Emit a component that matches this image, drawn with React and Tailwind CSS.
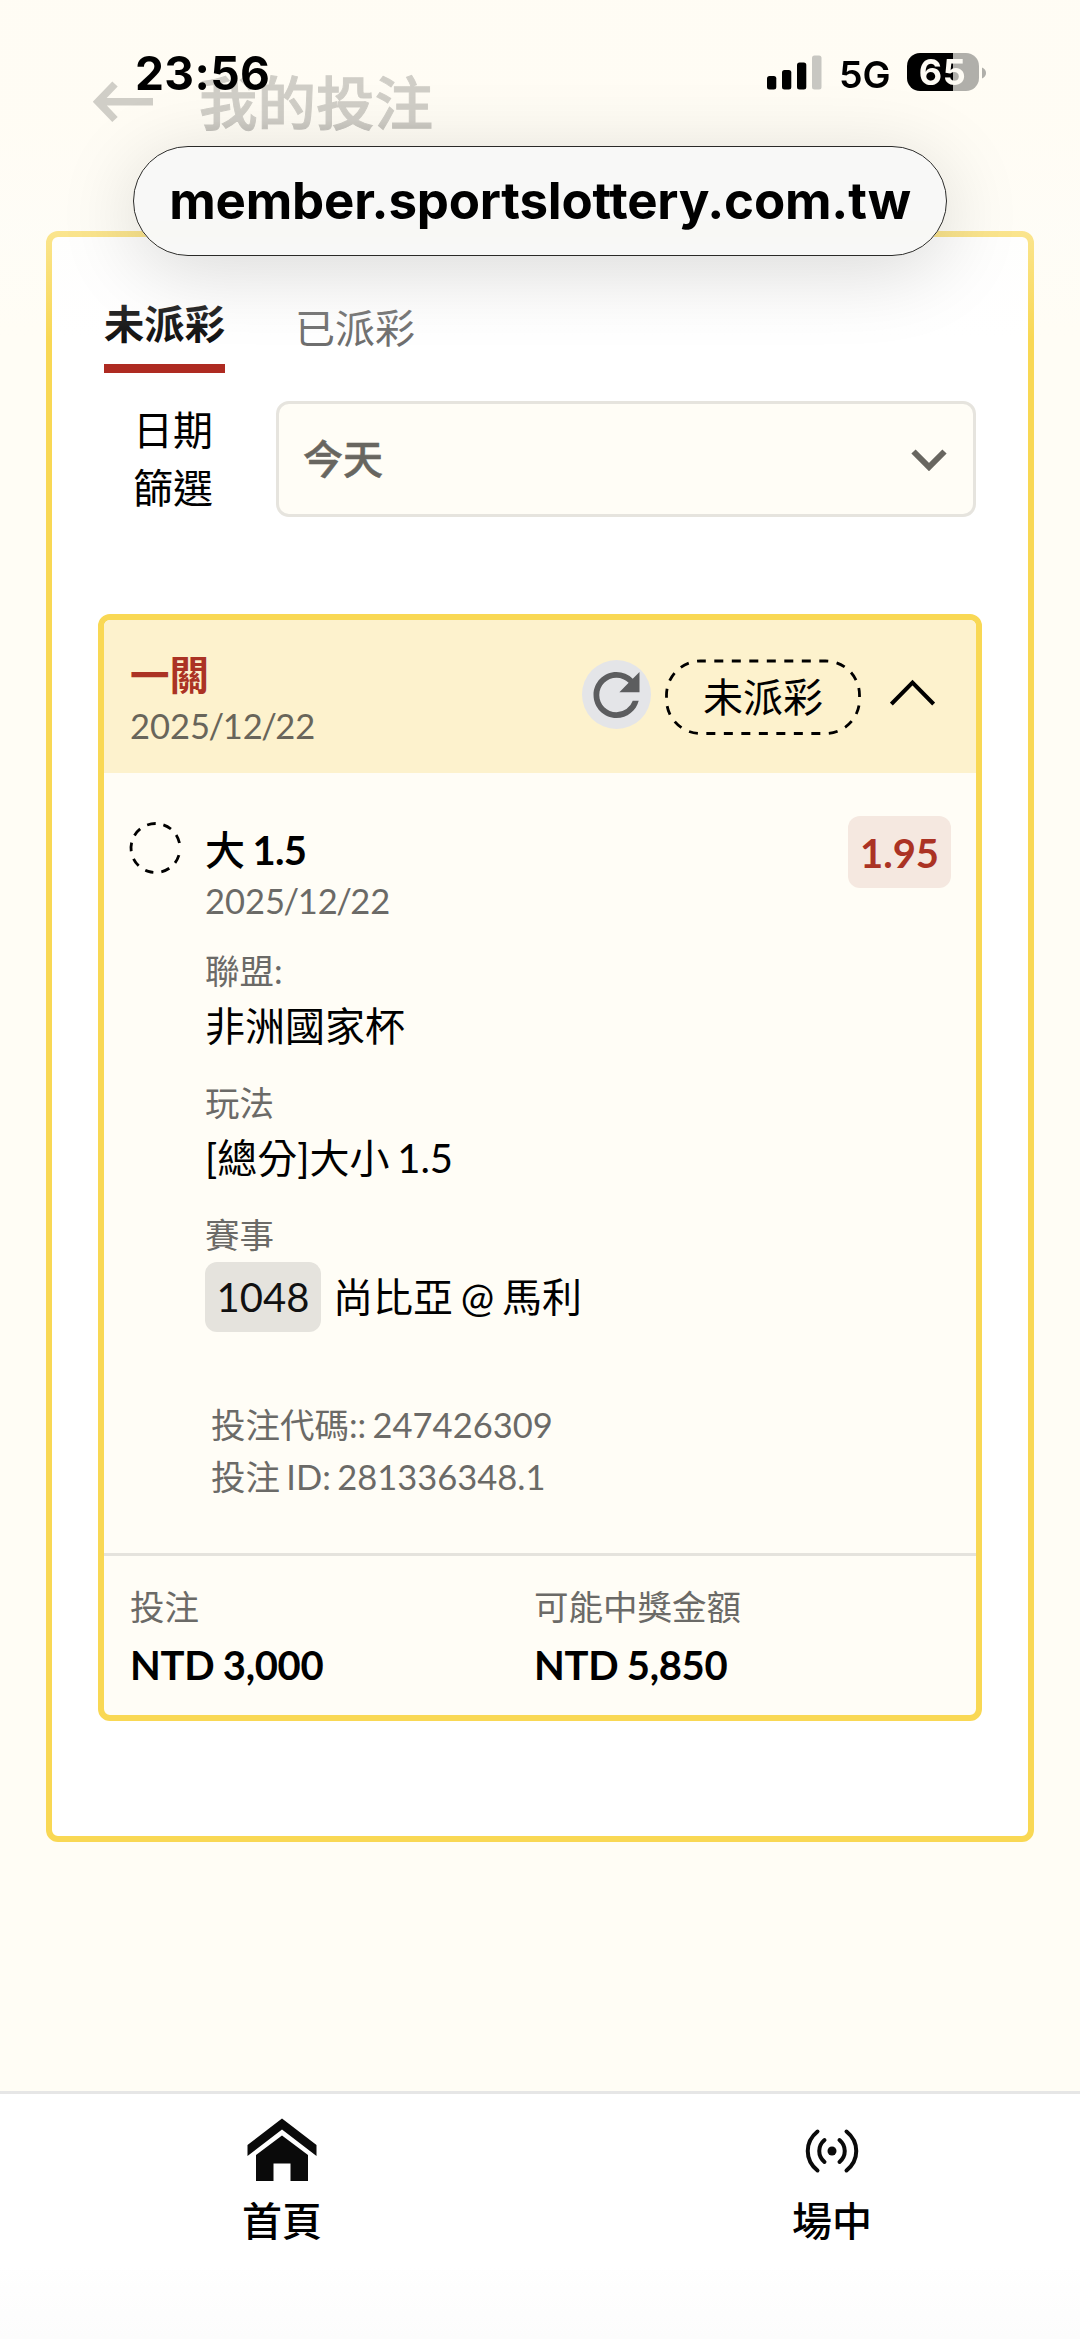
import React, { useState } from 'react';
import { MdRefresh } from 'react-icons/md';

const bet = {
  type: '一關',
  date: '2025/12/22',
  status: '未派彩',
  pick: '大',
  line: '1.5',
  odds: '1.95',
  league: '非洲國家杯',
  market: '[總分]大小 1.5',
  eventNo: '1048',
  teams: '尚比亞 @ 馬利',
  code: '247426309',
  id: '281336348.1',
  stake: 'NTD 3,000',
  payout: 'NTD 5,850',
};

function StatusBar() {
  return (
    <div className="absolute inset-x-0 top-0 flex h-[146px] items-start justify-between pl-[135px] pr-[94px] pt-[53px] font-['Inter','Liberation_Sans',sans-serif] text-black">
      <span className="text-[46px] leading-[41px] font-bold tracking-[0.4px]">23:56</span>
      <div className="flex items-start">
        <svg className="mt-[2px]" width="55" height="35" viewBox="0 0 55 35">
          <rect x="0" y="21" width="9.3" height="13.5" rx="2.5" />
          <rect x="15" y="15" width="9.3" height="19.5" rx="2.5" />
          <rect x="30" y="7.5" width="9.3" height="27" rx="2.5" />
          <rect x="45" y="0.5" width="9.5" height="34" rx="2.5" fill="#c8c7c2" />
        </svg>
        <span className="ml-[17px] mt-[2px] w-[52px] text-[37.5px] leading-[40px] font-semibold">5G</span>
        <div className="ml-[16px] h-[38px] w-[72px] rounded-[13px] bg-linear-to-r from-black from-64% to-[#b0afaa] to-64% pr-[1px] text-center text-[36px] leading-[38px] font-bold tracking-[0.5px] text-[#fdfbf4]">
          65
        </div>
        <svg className="ml-[3px] mt-[14px]" width="4" height="12" viewBox="0 0 4 12">
          <path d="M0 0.5C2.6 1.5 4 3.5 4 6S2.6 10.5 0 11.5Z" fill="#b0afaa" />
        </svg>
      </div>
    </div>
  );
}

function AddressPill() {
  return (
    <div className="absolute left-[133px] top-[146px] flex h-[110px] w-[814px] items-center justify-center rounded-[55px] border-[1.5px] border-[#2a2a28] bg-[#f8f8f7]/95 shadow-[0_14px_80px_rgba(0,0,0,0.15)] backdrop-blur-sm">
      <span className="font-['Inter','Liberation_Sans',sans-serif] text-[51px] leading-[60px] font-bold tracking-[-0.2px] whitespace-nowrap text-black">
        member.sportslottery.com.tw
      </span>
    </div>
  );
}

function PageHeader() {
  return (
    <header className="flex h-[231px] items-start pl-[93px] pt-[69px] text-[#161613]">
      <svg className="mt-[12px]" width="60" height="42" viewBox="0 0 60 42" fill="none" stroke="currentColor" strokeWidth="7.5">
        <path d="M60 20.7H6M22 3L5 20.7L22 38.5" />
      </svg>
      <h1 className="ml-[46px] text-[58.5px] leading-[66px] font-medium [-webkit-text-stroke:1px_currentColor]">我的投注</h1>
    </header>
  );
}

function Tabs({ active, onChange }) {
  const tabs = ['未派彩', '已派彩'];
  return (
    <div className="flex h-[79px] pl-[52px]">
      {tabs.map((tab) =>
        tab === active ? (
          <button key={tab} className="mr-[69px] h-[79px] w-[121px] border-b-[9px] border-[#ae2a21] text-[40.3px] leading-[60px] font-bold text-[#121212]">
            <span className="block h-[70px]">{tab}</span>
          </button>
        ) : (
          <button key={tab} onClick={() => onChange(tab)} className="h-[79px] w-[122px] text-[40px] leading-[69px] text-[#6f6f6f]">
            <span className="block h-[79px]">{tab}</span>
          </button>
        )
      )}
    </div>
  );
}

function DateFilter() {
  return (
    <div className="mt-[28px] flex h-[116px] pl-[51px]">
      <div className="w-[173px] pl-[30px] text-[40px] leading-[58px] text-black">
        <div>日期</div>
        <div>篩選</div>
      </div>
      <div className="flex w-[700px] items-center justify-between rounded-[13px] border-[3px] border-[#e6e4de] bg-[#fffdf6] pl-[24px] pr-[26px]">
        <span className="text-[40px] leading-[60px] font-medium text-[#686660] [-webkit-text-stroke:0.6px_currentColor]">今天</span>
        <svg className="mt-[2px]" width="36" height="22" viewBox="0 0 36 22" fill="none" stroke="#686660" strokeWidth="6">
          <path d="M2.5 2.5L18 18L33.5 2.5" />
        </svg>
      </div>
    </div>
  );
}

function BetDate({ value }) {
  const [year, month, day] = value.split('/');
  return (
    <>
      {year}
      <span className="-mx-[1.5px]">/</span>
      {month}
      <span className="-mx-[1.5px]">/</span>
      {day}
    </>
  );
}

function BetHeader() {
  return (
    <div className="flex h-[153px] items-start bg-[#fdf2cd] pl-[26px]">
      <div className="w-[452px] pt-[30px]">
        <div className="text-[39.5px] leading-[50px] font-bold text-[#ab3324]">{bet.type}</div>
        <div className="text-[34.5px] leading-[51px] text-[#68655a]">
          <BetDate value={bet.date} />
        </div>
      </div>
      <button className="mt-[40px] flex size-[69px] items-center justify-center rounded-full bg-[#e4e5e8] text-[#5c5d5f]">
        <MdRefresh size={70} />
      </button>
      <div className="relative ml-[14px] mt-[39px] h-[77px] w-[196px] text-center text-[40px] leading-[76px] text-black">
        <svg className="absolute inset-0" width="196" height="77" viewBox="0 0 196 77" fill="none" stroke="#000" strokeWidth="2.8">
          <rect x="1.5" y="2" width="193" height="72.5" rx="34" strokeDasharray="9 8.5" strokeDashoffset="-13.8" />
        </svg>
        {bet.status}
      </div>
      <svg className="ml-[29px] mt-[59px]" width="45" height="27" viewBox="0 0 45 27" fill="none" stroke="#000" strokeWidth="4">
        <path d="M1.4 25L22.5 3.5L43.6 25" />
      </svg>
    </div>
  );
}

function Field({ label, children }) {
  return (
    <div className="mb-[22px]">
      <div className="text-[34.5px] leading-[50px] text-[#6b6a67]">{label}</div>
      <div className="text-[40px] leading-[60px] text-black">{children}</div>
    </div>
  );
}

function BetBody() {
  return (
    <div className="flex h-[780px] pl-[25px] pt-[43px]">
      <svg className="mt-[5px]" width="54" height="54" viewBox="0 0 54 54" fill="none" stroke="#000" strokeWidth="2.8">
        <circle
          cx="26.5"
          cy="27"
          r="24.5"
          transform="rotate(17 26.5 27)"
          strokeDasharray="8.6 7.9 8.6 7.9 8.6 7.9 8.6 7.9 8.6 7.9 8.6 7.9 8.6 7.9 8.6 7.9 8.6 14"
        />
      </svg>
      <div className="w-[665px] pl-[22px] pt-[8px]">
        <div className="text-[40px] leading-[52px] font-medium text-black">
          {bet.pick} <span className="font-bold tracking-[-0.8px]">{bet.line}</span>
        </div>
        <div className="mb-[20px] text-[34.5px] leading-[50px] text-[#6b6a67]">
          <BetDate value={bet.date} />
        </div>
        <Field label="聯盟:">{bet.league}</Field>
        <Field label="玩法">{bet.market}</Field>
        <div className="text-[34.5px] leading-[50px] text-[#6b6a67]">賽事</div>
        <div className="mt-[2px] flex text-[40px] leading-[70px] text-black">
          <span className="mr-[12px] w-[116px] rounded-[12px] bg-[#e5e3dd] text-center text-[#111]">{bet.eventNo}</span>
          <span>{bet.teams}</span>
        </div>
        <div className="mt-[67px] pl-[6px] text-[34.5px] leading-[52px] text-[#6b6a67]">
          <div>投注代碼:: {bet.code}</div>
          <div>投注 ID: {bet.id}</div>
        </div>
      </div>
      <div className="h-[72px] w-[103px] rounded-[12px] bg-[#f5e8e0] text-center text-[40px] leading-[74px] font-bold text-[#ab3324]">
        {bet.odds}
      </div>
    </div>
  );
}

function BetFooter() {
  return (
    <div className="flex h-[162px] border-t-[3px] border-[#e5e3dd] pl-[26px] pt-[26px]">
      <div className="w-[404px]">
        <div className="text-[34.5px] leading-[50px] text-[#6b6a67]">投注</div>
        <div className="mt-[3px] text-[40px] leading-[60px] font-bold tracking-[-0.3px] text-black [word-spacing:-1px]">{bet.stake}</div>
      </div>
      <div>
        <div className="text-[34.5px] leading-[50px] text-[#6b6a67]">可能中獎金額</div>
        <div className="mt-[3px] text-[40px] leading-[60px] font-bold tracking-[-0.3px] text-black [word-spacing:-1px]">{bet.payout}</div>
      </div>
    </div>
  );
}

function BottomNav() {
  return (
    <nav className="mt-auto flex h-[248px] border-t-[3px] border-[#e6e6e6] bg-linear-to-b from-white from-70% to-[#fcfcfc] text-[40px] leading-[58px] font-medium text-black">
      <a className="flex w-[564px] shrink-0 flex-col items-center pt-[24px]">
        <svg width="70" height="64" viewBox="0 0 70 64" fill="#0a0a0a">
          <path d="M35 0.5L69.5 27V38L35 11.5L0.5 38V27Z" />
          <path d="M35 17.5L61 37V63H43.5V45.5H26.5V63H9V37Z" />
        </svg>
        <span className="mt-[10px]">首頁</span>
      </a>
      <a className="flex w-[536px] shrink-0 flex-col items-center pt-[24px]">
        <svg width="54" height="64" viewBox="0 0 54 64" fill="none" stroke="#0a0a0a" strokeWidth="4" strokeLinecap="round">
          <circle cx="27" cy="33" r="4.5" fill="#0a0a0a" stroke="none" />
          <path d="M19.5 22C12.5 28 12.5 38 19.5 44M34.5 22C41.5 28 41.5 38 34.5 44" />
          <path d="M12.5 13.5C-0.5 24 -0.5 42 12.5 52.5M41.5 13.5C54.5 24 54.5 42 41.5 52.5" />
        </svg>
        <span className="mt-[10px]">場中</span>
      </a>
    </nav>
  );
}

function App() {
  const [tab, setTab] = useState('未派彩');

  return (
    <div
      lang="zh-Hant"
      className="relative flex h-[2339px] w-[1080px] flex-col overflow-hidden bg-[#fffdf5] font-['Lato','Noto_Sans_CJK_TC',sans-serif] [word-spacing:-2.5px]"
    >
      <PageHeader />
      <main className="mx-[46px] h-[1611px] rounded-[12px] border-[6px] border-[#f9d854] bg-white pt-[57px]">
        <Tabs active={tab} onChange={setTab} />
        <DateFilter />
        <section className="ml-[46px] mt-[97px] w-[884px] overflow-hidden rounded-[12px] border-[6px] border-[#f9d854] bg-[#fffdf6]">
          <BetHeader />
          <BetBody />
          <BetFooter />
        </section>
      </main>
      <BottomNav />

      {/* Browser chrome floating over the page */}
      <div className="pointer-events-none absolute inset-x-0 top-0 h-[340px] bg-linear-to-b from-[#fffcf4]/80 from-35% via-[#fdfcf9]/35 via-68% to-transparent"></div>
      <AddressPill />
      <StatusBar />
    </div>
  );
}

export default App;
